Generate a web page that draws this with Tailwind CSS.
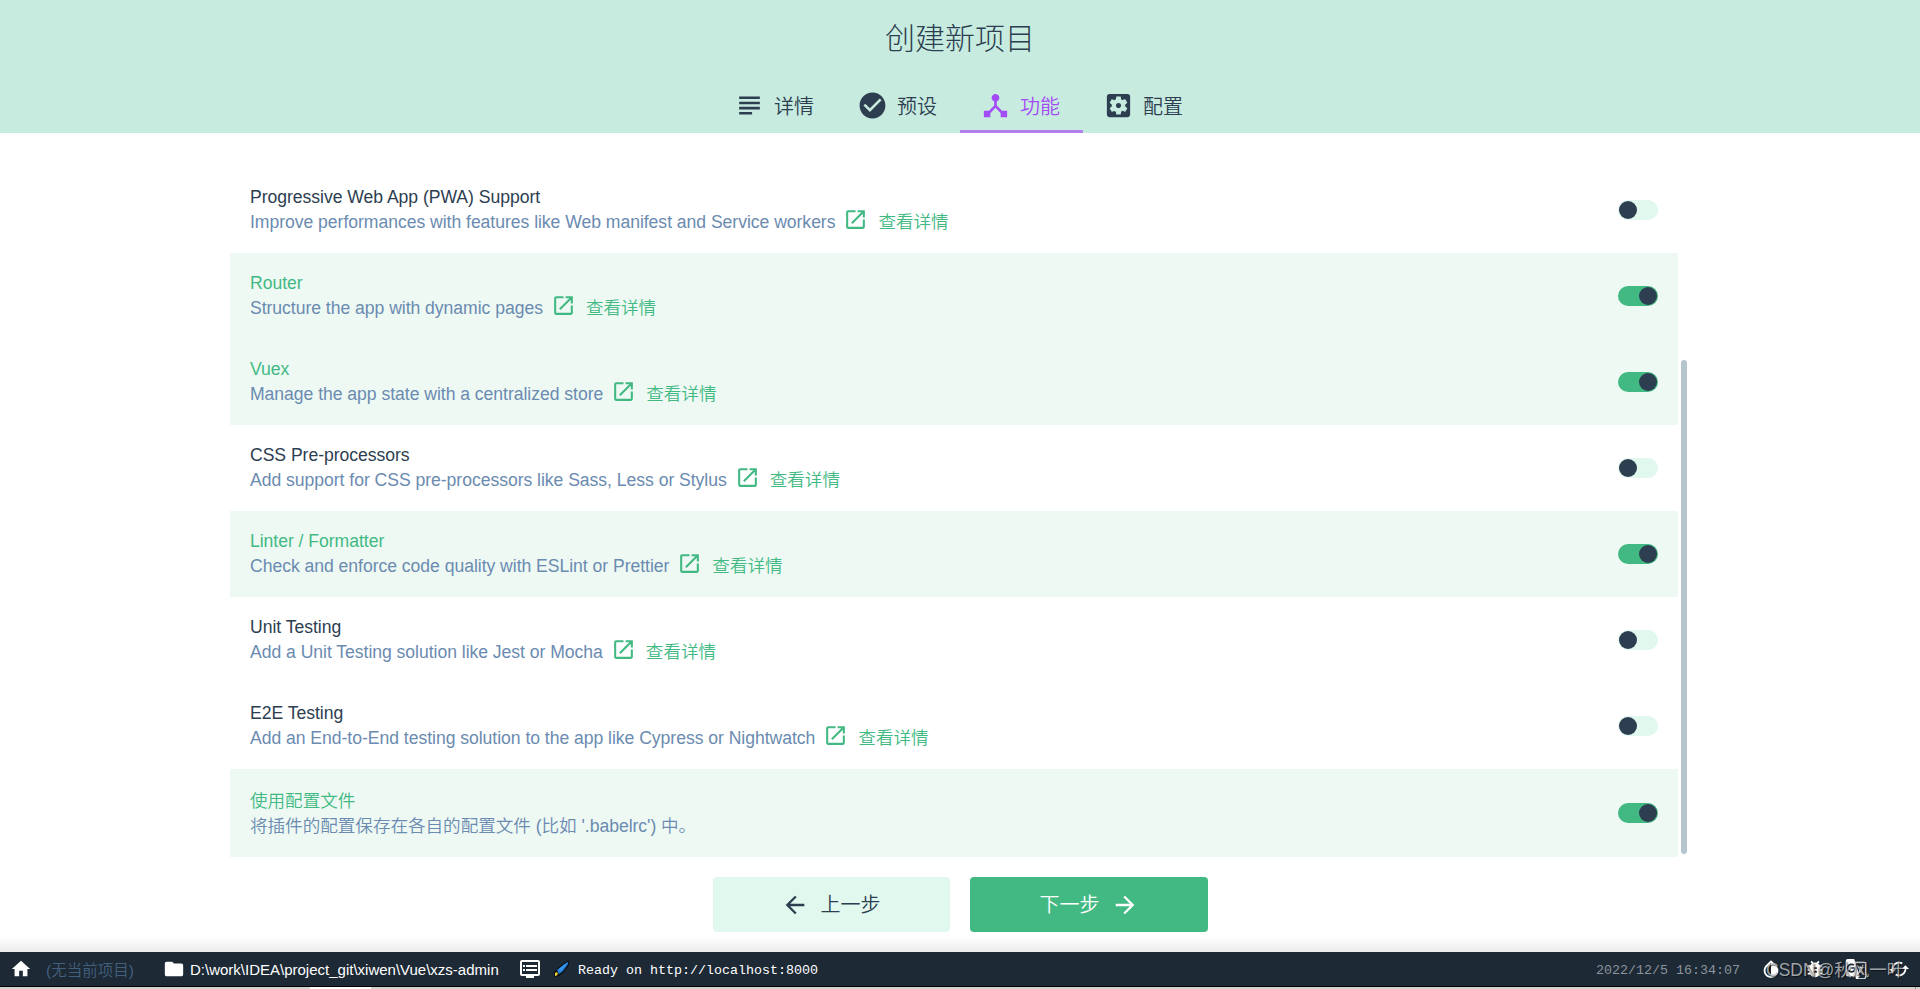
<!DOCTYPE html>
<html lang="zh-CN">
  <head>
    <meta charset="UTF-8" />
    <meta name="viewport" content="width=device-width, initial-scale=1.0" />
    <title>创建新项目</title>
    <script src="https://cdn.jsdelivr.net/npm/@tailwindcss/browser@4"></script>
  </head>
  <body class="h-screen overflow-hidden bg-white flex flex-col text-[#2c3e50] font-['Liberation_Sans','Noto_Sans_CJK_SC',sans-serif]">
    <!-- Header with tabs -->
    <header class="h-[133px] shrink-0 bg-[#c8ebdf] flex flex-col items-center justify-between">
      <h1 class="mt-[16px] text-[30px] leading-[46px] font-light">创建新项目</h1>
      <nav class="flex text-[20px] leading-[30px] font-[350]">
        <div class="w-[123px] h-[54px] pl-[20px] pt-[2px] flex items-center border-b-3 border-transparent">
          <svg class="w-[31px] h-[31px] mr-[9px] shrink-0" viewBox="0 0 24 24" fill="currentColor"><path d="M14 17H4v2h10v-2zm6-8H4v2h16V9zM4 15h16v-2H4v2zM4 5v2h16V5H4z" /></svg>
          <span class="pt-[2px]">详情</span>
        </div>
        <div class="w-[123px] h-[54px] pl-[20px] pt-[2px] flex items-center border-b-3 border-transparent">
          <svg class="w-[31px] h-[31px] mr-[9px] shrink-0" viewBox="0 0 24 24" fill="currentColor"><path d="M12 2C6.480 2 2 6.480 2 12s4.480 10 10 10 10-4.480 10-10S17.520 2 12 2zm-2 15l-5-5 1.410-1.410L10 14.170l7.590-7.590L19 8l-9 9z" /></svg>
          <span class="pt-[2px]">预设</span>
        </div>
        <div class="w-[123px] h-[54px] pl-[20px] pt-[2px] flex items-center border-b-3 border-[#b37feb] text-[#a34cf5]">
          <svg class="w-[31px] h-[31px] mr-[9px] shrink-0" viewBox="0 0 24 24" fill="currentColor"><path d="M17 16l-4-4V8.820C14.160 8.400 15 7.300 15 6c0-1.660-1.340-3-3-3S9 4.340 9 6c0 1.300.840 2.400 2 2.820V12l-4 4H3v5h5v-3.050l4-4.200l4 4.200V21h5v-5h-4z" /></svg>
          <span class="pt-[2px]">功能</span>
        </div>
        <div class="w-[123px] h-[54px] pl-[20px] pt-[2px] flex items-center border-b-3 border-transparent">
          <svg class="w-[31px] h-[31px] mr-[9px] shrink-0" viewBox="0 0 24 24" fill="currentColor"><path d="M12 10c-1.100 0-2 .9-2 2s.9 2 2 2 2-.9 2-2-.9-2-2-2zm7-7H5c-1.110 0-2 .9-2 2v14c0 1.100.890 2 2 2h14c1.110 0 2-.9 2-2V5c0-1.100-.890-2-2-2zm-1.750 9c0 .230-.020.460-.050.680l1.480 1.160c.130.110.170.300.080.450l-1.400 2.420c-.090.150-.270.210-.430.150l-1.740-.7c-.360.280-.760.510-1.180.690l-.260 1.850c-.030.170-.180.300-.350.300h-2.800c-.170 0-.320-.130-.350-.290l-.260-1.850c-.430-.180-.820-.410-1.180-.690l-1.740.7c-.160.060-.340 0-.430-.150l-1.400-2.420c-.090-.150-.050-.340.080-.450l1.480-1.160c-.030-.230-.050-.460-.050-.690 0-.230.020-.460.050-.680l-1.480-1.160c-.130-.110-.170-.300-.080-.450l1.400-2.420c.090-.150.270-.210.430-.150l1.740.7c.360-.280.760-.510 1.180-.690l.260-1.850c.030-.170.180-.300.350-.300h2.800c.170 0 .320.130.350.290l.260 1.850c.430.180.820.410 1.180.690l1.740-.7c.160-.060.340 0 .430.150l1.400 2.420c.090.150.050.340-.080.450l-1.480 1.160c.030.230.050.460.050.690z" /></svg>
          <span class="pt-[2px]">配置</span>
        </div>
      </nav>
    </header>

    <!-- Feature list -->
    <main class="h-[724px] shrink-0 flex pt-[34px] pl-[230px] overflow-hidden">
      <div id="features" class="w-[1448px] shrink-0"></div>
      <div class="w-[6px] h-[494px] mt-[193px] ml-[3px] rounded-full bg-[#b6c6cf]"></div>
    </main>

    <!-- Actions -->
    <div class="h-[95px] shrink-0 flex justify-center gap-[20px] pt-[20px] pl-px text-[20px] font-[350] bg-linear-to-b from-white from-84% to-[#ebebeb]">
      <button class="w-[237px] h-[55px] rounded-[4px] bg-[#e0f8ed] flex items-center justify-center gap-[12px] pr-[2px]">
        <svg class="w-[28px] h-[28px]" viewBox="0 0 24 24" fill="currentColor"><path d="M20 11H7.830l5.590-5.590L12 4l-8 8l8 8l1.410-1.410L7.830 13H20z" /></svg>
        上一步
      </button>
      <button class="w-[238px] h-[55px] rounded-[4px] bg-[#42b983] text-white flex items-center justify-center gap-[11px]">
        下一步
        <svg class="w-[28px] h-[28px]" viewBox="0 0 24 24" fill="currentColor"><path d="M12 4l-1.410 1.410L16.170 11H4v2h12.170l-5.580 5.590L12 20l8-8z" /></svg>
      </button>
    </div>

    <!-- Status bar -->
    <footer class="relative h-[35px] shrink-0 bg-[#1d2935] border-b border-black flex items-center text-white whitespace-nowrap">
      <svg class="w-[22px] h-[22px] ml-[10px] shrink-0" viewBox="0 0 24 24" fill="currentColor"><path d="M10 20v-6h4v6h5v-8h3L12 3L2 12h3v8z" /></svg>
      <span class="ml-[14px] w-[88px] pt-[3px] text-[15.500px] font-[350] text-[#42607e]">(无当前项目)</span>
      <svg class="w-[22px] h-[22px] ml-[29px] shrink-0" viewBox="0 0 24 24" fill="currentColor"><path d="M10 4H4c-1.100 0-2 .9-2 2v12c0 1.100.9 2 2 2h16c1.100 0 2-.9 2-2V8c0-1.100-.9-2-2-2h-8z" /></svg>
      <span class="ml-[5px] w-[309px] pt-[3px] text-[15px]">D:\work\IDEA\project_git\xiwen\Vue\xzs-admin</span>
      <svg class="w-[24px] h-[24px] ml-[19px] shrink-0" viewBox="0 0 24 24" fill="currentColor"><path fill-rule="evenodd" d="M20 3H4a2 2 0 0 0-2 2v12a2 2 0 0 0 2 2h4v2h8v-2h4a2 2 0 0 0 2-2V5a2 2 0 0 0-2-2zm0 14H4V5h16zM8 8h11v2H8zM8 12h11v2H8zM5 8h2v2H5zM5 12h2v2H5z" /></svg>
      <svg class="w-[17px] h-[18px] ml-[11px] shrink-0" viewBox="0 0 17 18"><path d="M1 17V12L6 7L14 1h2v4L11 12L6 16z" fill="#0b1118" /><path d="M4 10L13 3l2-1v2L10 11L6 14z" fill="#2382dd" /><path d="M6 9L12 4l1 1L7 11z" fill="#3f9bec" /><path d="M2 16v-3l2-1l1 2l-2 2z" fill="#e5d02f" /></svg>
      <span class="ml-[8px] pt-[4px] text-[13.330px] font-['Liberation_Mono',monospace]">Ready on http://localhost:8000</span>

      <span class="ml-auto mr-[20px] pt-[4px] text-[13.330px] text-[#8b949c] font-['Liberation_Mono',monospace]">2022/12/5 16:34:07</span>
      <svg class="w-[22px] h-[22px] mr-[22px] shrink-0" viewBox="0 0 24 24" fill="currentColor"><path d="M17.660 8L12 2.350L6.340 8C4.780 9.560 4 11.640 4 13.640s.780 4.110 2.340 5.670s3.610 2.350 5.660 2.350s4.100-.790 5.660-2.350S20 15.640 20 13.640S19.220 9.560 17.660 8zM6 14c.010-2 .620-3.270 1.760-4.400L12 5.270v14.320c-4-.090-6-2.590-6-5.590z" /></svg>
      <svg class="w-[22px] h-[22px] mr-[19px] shrink-0" viewBox="0 0 24 24" fill="currentColor"><path d="M20 8h-2.810a5.985 5.985 0 0 0-1.820-1.960L17 4.410L15.590 3l-2.170 2.170a6.002 6.002 0 0 0-2.830 0L8.410 3L7 4.410l1.620 1.630C7.880 6.550 7.260 7.220 6.810 8H4v2h2.090c-.050.330-.090.660-.090 1v1H4v2h2v1c0 .340.040.670.090 1H4v2h2.810c1.040 1.790 2.970 3 5.190 3s4.150-1.210 5.190-3H20v-2h-2.090c.050-.330.090-.660.090-1v-1h2v-2h-2v-1c0-.340-.040-.670-.090-1H20V8zm-6 8h-4v-2h4v2zm0-4h-4v-2h4v2z" /></svg>
      <svg class="w-[22px] h-[22px] mr-[21px] shrink-0" viewBox="0 0 24 24" fill="currentColor"><path fill-rule="evenodd" d="M21 4H11L10 1H3c-1.100 0-2 .9-2 2v15c0 1.100.9 2 2 2h8l1 3h9c1.100 0 2-.9 2-2V6c0-1.100-.9-2-2-2zM7 16c-2.760 0-5-2.240-5-5s2.240-5 5-5c1.350 0 2.480.5 3.350 1.300L9.030 8.570c-.380-.360-1.040-.780-2.030-.780c-1.740 0-3.150 1.440-3.150 3.210S5.260 14.210 7 14.210c2.010 0 2.840-1.440 2.920-2.410H7v-1.710h4.680c.070.310.120.610.120 1.020C11.800 13.970 9.890 16 7 16zm15 5c0 .550-.450 1-1 1h-7l2-2l-4.700-14.700H21c.550 0 1 .450 1 1z" /><path d="M14 10h2V9h1v1h4v1h-1.500c-.400 1.500-1.100 2.700-1.900 3.700l2.500 2.500l-.7.7l-2.500-2.400l-1.200 1.200l-.400-1.100l.900-.900c-.6-.7-1-1.400-1.300-2.100h1l1 1.400c.6-.8 1.100-1.700 1.400-2.900H14z" /></svg>
      <svg class="w-[22px] h-[22px] mr-[10px] shrink-0" viewBox="0 0 24 24" fill="currentColor"><path d="M19 8l-4 4h3c0 3.310-2.690 6-6 6c-1.010 0-1.970-.250-2.800-.7l-1.460 1.460A7.930 7.930 0 0 0 12 20c4.420 0 8-3.580 8-8h3l-4-4zM6 12c0-3.310 2.690-6 6-6c1.010 0 1.970.250 2.800.7l1.460-1.460A7.930 7.930 0 0 0 12 4c-4.420 0-8 3.580-8 8H1l4 4l4-4H6z" /></svg>
      <!-- Watermark over the icons -->
      <span class="absolute left-[1766px] top-[5px] text-[17.500px] leading-[26px] [word-spacing:-4px] text-[#c4c8cb]/80 text-shadow-[1px_1px_1px_rgb(0_0_0/0.6)]">CSDN @秋风一叶</span>
    </footer>
    <div class="flex h-[2px] shrink-0 bg-[#d5d3d2]">
      <div class="ml-[310px] w-[61px] bg-white"></div>
      <div class="ml-auto mr-[4px] w-px bg-[#8a8a8a]"></div>
    </div>

    <script>
      const features = [
        { name: "Progressive Web App (PWA) Support", text: "Improve performances with features like Web manifest and Service workers", link: true, on: false },
        { name: "Router", text: "Structure the app with dynamic pages", link: true, on: true },
        { name: "Vuex", text: "Manage the app state with a centralized store", link: true, on: true },
        { name: "CSS Pre-processors", text: "Add support for CSS pre-processors like Sass, Less or Stylus", link: true, on: false },
        { name: "Linter / Formatter", text: "Check and enforce code quality with ESLint or Prettier", link: true, on: true },
        { name: "Unit Testing", text: "Add a Unit Testing solution like Jest or Mocha", link: true, on: false },
        { name: "E2E Testing", text: "Add an End-to-End testing solution to the app like Cypress or Nightwatch", link: true, on: false },
        { name: "使用配置文件", text: "将插件的配置保存在各自的配置文件 (比如 '.babelrc') 中。", link: false, on: true },
      ];

      const link = `
        <svg class="w-[25px] h-[25px] ml-[8px] mr-[10px] -mt-[6px] text-[#42b983]" viewBox="0 0 24 24" fill="currentColor"><path d="M19 19H5V5h7V3H5c-1.110 0-2 .9-2 2v14c0 1.100.890 2 2 2h14c1.100 0 2-.9 2-2v-7h-2v7zM14 3v2h3.590l-9.830 9.830l1.410 1.410L19 6.410V10h2V3h-7z" /></svg>
        <span class="text-[#42b983] font-[350]">查看详情</span>`;

      document.getElementById("features").innerHTML = features.map((f) => `
        <div class="${f.link ? "h-[86px]" : "h-[88px]"} px-[20px] flex items-center justify-between ${f.on ? "bg-[#eef9f4]" : ""}">
          <div class="text-[17.600px] tracking-[-0.040px] ${f.link ? "" : "pt-[2px] font-[350]"}">
            <div class="h-[25px] leading-[25px] ${f.on ? "text-[#42b983]" : ""}">${f.name}</div>
            <div class="h-[25px] leading-[25px] flex items-center text-[#6b8bb0]"><span>${f.text}</span>${f.link ? link : ""}</div>
          </div>
          <div class="w-[40px] h-[20px] p-[1px] rounded-full flex ${f.on ? "bg-[#42b983] justify-end" : "bg-[#e0f8ed]"}">
            <div class="w-[18px] h-[18px] rounded-full bg-[#2c3e50]"></div>
          </div>
        </div>`).join("");
    </script>
  </body>
</html>
